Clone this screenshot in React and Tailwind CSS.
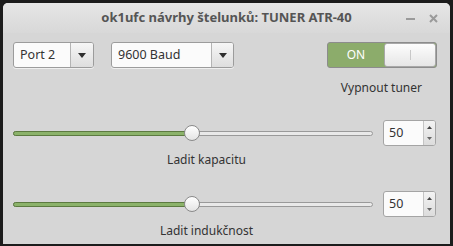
import React from 'react';

const Combo = ({ label, width, btn }) => (
  <div
    className="flex h-[26px] rounded-[3px] border border-[#9c9c9c] bg-[#fbfbfb] overflow-hidden shadow-[0_1px_0_rgba(255,255,255,0.6)]"
    style={{ width }}
  >
    <div className="flex-1 flex items-center pl-[6px] text-[12.5px] text-[#333]">{label}</div>
    <div
      className="flex items-center justify-center border-l border-[#b4b4b4] bg-gradient-to-b from-[#f6f6f6] to-[#dedede]"
      style={{ width: btn }}
    >
      <svg width="8" height="5" viewBox="0 0 8 5">
        <path d="M0 0 L8 0 L4 5 Z" fill="#2e2e2e" />
      </svg>
    </div>
  </div>
);

const Spin = () => (
  <div className="flex h-[26px] w-[53px] rounded-[3px] border border-[#a4a4a4] bg-[#fbfbfb] overflow-hidden">
    <div className="flex-1 flex items-center pl-[5px] text-[12.5px] text-[#333]">50</div>
    <div className="w-[12px] flex flex-col items-center justify-between py-[5px] border-l border-[#c4c4c4] bg-gradient-to-b from-[#f3f3f3] to-[#dcdcdc]">
      <svg width="5" height="3" viewBox="0 0 5 3">
        <path d="M0 3 L5 3 L2.5 0 Z" fill="#444" />
      </svg>
      <svg width="5" height="3" viewBox="0 0 5 3">
        <path d="M0 0 L5 0 L2.5 3 Z" fill="#666" />
      </svg>
    </div>
  </div>
);

const Slider = () => (
  <div className="relative w-[360px] h-[16px] flex items-center">
    <div className="w-full h-[5px] rounded-full border border-[#9a9a9a] bg-[#e9e9e9] flex">
      <div className="w-[178px] -m-px h-[5px] rounded-full border border-[#5c7a40] bg-[#8bb26a]" />
    </div>
    <div className="absolute left-[171px] top-0 w-[16px] h-[16px] rounded-full border border-[#8a8a8a] bg-gradient-to-b from-[#ffffff] to-[#e4e4e4]" />
  </div>
);

const SliderRow = ({ label }) => (
  <div className="flex flex-col">
    <div className="flex items-center">
      <Slider />
      <div className="ml-[10px]">
        <Spin />
      </div>
    </div>
    <div className="w-[387px] text-center text-[12px] text-[#333] mt-[5px]">{label}</div>
  </div>
);

export default function App() {
  return (
    <div
      className="w-[453px] h-[246px] bg-[#1c1c1c] pt-[3px] px-[3px] overflow-hidden"
      style={{ fontFamily: '"Noto Sans", sans-serif' }}
    >
      <div className="w-[447px] h-[241px] rounded-t-[5px] bg-[#d6d6d6] flex flex-col overflow-hidden">
        <div className="relative h-[30px] flex items-center justify-center bg-gradient-to-b from-[#e6e6e6] to-[#d8d8d8]">
          <span className="text-[13px] font-bold text-[#555]">ok1ufc návrhy štelunků: TUNER ATR-40</span>
          <div className="absolute right-[12px] top-0 h-full flex items-center gap-[14px]">
            <div className="w-[9px] h-[2px] bg-[#9a9a9a] mt-[2px]" />
            <svg width="9" height="9" viewBox="0 0 9 9">
              <path d="M1 1 L8 8 M8 1 L1 8" stroke="#9a9a9a" strokeWidth="2" />
            </svg>
          </div>
        </div>

        <div className="flex flex-col pl-[10px] pt-[9px]">
          <div className="flex items-start">
            <Combo label="Port 2" width={81} btn={23} />
            <div className="ml-[17px]">
              <Combo label="9600 Baud" width={123} btn={22} />
            </div>
            <div className="ml-auto mr-[13px] flex flex-col items-end">
              <div className="flex w-[110px] h-[26px] rounded-[3px] border border-[#8c8c8c] bg-[#8cac6b] overflow-hidden">
                <div className="w-[56px] flex items-center justify-center text-[12px] text-white">ON</div>
                <div className="flex-1 rounded-[3px] border border-[#a8a8a8] bg-gradient-to-b from-[#fdfdfd] to-[#e6e6e6] flex items-center justify-center">
                  <div className="w-px h-[10px] bg-[#c8c8c8]" />
                </div>
              </div>
              <div className="mt-[11px] mr-[15px] text-[12px] text-[#333]">Vypnout tuner</div>
            </div>
          </div>

          <div className="mt-[23px]">
            <SliderRow label="Ladit kapacitu" />
          </div>
          <div className="mt-[22px]">
            <SliderRow label="Ladit indukčnost" />
          </div>
        </div>
      </div>
    </div>
  );
}
